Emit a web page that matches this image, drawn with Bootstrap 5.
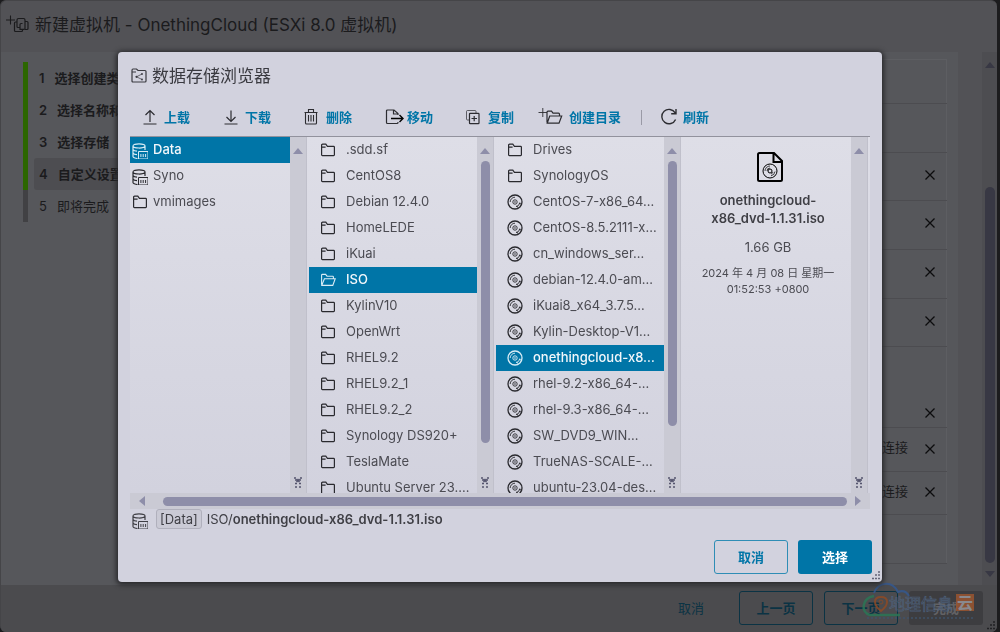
<!DOCTYPE html>
<html lang="zh-CN">
<head>
<meta charset="utf-8">
<meta name="viewport" content="width=device-width, initial-scale=1">
<title>数据存储浏览器</title>
<link href="https://cdn.jsdelivr.net/npm/bootstrap@5.3.0/dist/css/bootstrap.min.css" rel="stylesheet">
<style>
  :root { --ink:#3f3f45; --blue:#0075a7; --thumb:#8e8ea9; --track:#cacad4; }
  body { font-family:Inter,"Noto Sans CJK SC",sans-serif; font-size:13px; line-height:18px; color:var(--ink); background:#1c1c1e; }
  svg { flex:none; fill:none; stroke:currentColor; overflow:visible; }
  .i16 { width:16px; height:16px; }
  .i18 { width:18px; height:18px; }
  .defs { width:0; height:0; }

  /* wizard behind the dialog */
  .wizard { height:100vh; background:#525256; color:#1b1b1d; border-radius:6px; margin-right:3px; border:1px solid #454548; border-width:1px 0 0 1px; }
  .wizard-title { height:51px; padding:0 0 4px 5px; font-size:17px; line-height:24px; gap:6px; }
  .wizard-main { background:#56575b; min-height:0; }
  .steps { width:230px; padding:10px 0 0 22px; }
  .steps li { height:32px; border-left:5px solid #2c6600; padding-left:6px; }
  .steps li:last-child { border-color:#414144; }
  .steps a { height:32px; padding-left:5px; padding-bottom:1px; gap:10px; color:#1b1b1d; text-decoration:none; border-radius:3px; }
  .steps .done { font-weight:600; }
  .steps .now { background:#4d4d51; }
  .hw { padding:7px 11px 0 0; }
  .hw table { border:1px solid #5d5e62; border-left:0; width:100%; }
  .hw tr { border-bottom:1px solid #4c4c50; }
  .hw td { height:49px; padding:0 8px 6px 0; text-align:right; }
  .hw .short td { height:44px; padding-bottom:4px; }
  .hw tr:nth-child(3n) td { height:48px; }
  .hw .short:nth-child(3n) td { height:43px; }
  .hw .tall td { height:81px; vertical-align:bottom; padding-bottom:6px; }
  .x-btn { border:0; background:none; padding:0; width:16px; height:16px; margin-left:14px; color:#0c0c0e; line-height:0; }
  .gutter { width:24px; background:#525256; }
  .main-sb { width:15px; background:#4d4d51; padding:10px 3px 8px 3px; }
  .main-sb .thumb { background:#383844; width:10px; }
  .main-sb svg { color:#383844; }
  .wizard-foot { height:47px; padding:0 14px 1px 0; gap:11px; background:#4b4b4e; }
  .ui-btn { width:74px; height:34px; border-radius:3px; font-size:13px; line-height:18px; font-weight:600; padding:0 0 1px; border:1px solid transparent; background:none; }
  .ui-btn.dark { color:#0b3344; border-color:#0b3344; }
  .ui-btn.off { background:#3d3d40; color:#626265; }
  .grip { position:absolute; right:2px; bottom:2px; width:9px; height:9px; color:#66667a; }
  .wizard .grip { color:#222225; }
  .brand { position:absolute; right:17px; bottom:8px; width:120px; height:42px; opacity:.85; }
  .brand text { stroke:none; }

  /* dialog */
  .browser-modal { --bs-modal-width:764px; }
  .browser-modal .modal-dialog { margin-top:52px; margin-bottom:0; }
  .browser-modal .modal-content { background:#d2d2de; color:var(--ink); border:0; border-radius:4px; box-shadow:0 1px 5px 2px #29292c; padding:12px 10px 8px 12px; font-weight:400; }
  .dlg-title { font-size:17px; line-height:24px; font-weight:400; gap:4px; color:#3a3a40; }
  .tools { height:36px; padding-left:11px; margin:11px 0 1px; gap:32px; }
  .tools button { border:0; background:none; padding:0; gap:5px; color:var(--blue); font-weight:700; white-space:nowrap; }
  .tools svg { color:#2c2c31; }
  .tools .rule { width:1px; height:15px; background:#9a9aa6; margin:0 -14px 0 -12px; }
  .panes { height:357px; display:grid; grid-template-columns:177px 1fr 1fr 1fr; border-top:1px solid #92929d; padding-right:2px; margin-right:2px; background:linear-gradient(#dedee7,#d2d2de); }
  .pane { min-width:0; min-height:0; display:flex; border-right:1px solid #c0c0cb; overflow:hidden; }
  .pane + .pane { padding-left:2px; }
  .files { flex:1; min-width:0; overflow:hidden; border-radius:0; }
  .files .list-group-item { flex:none; display:flex; align-items:center; height:26px; padding:0 0 2px 11px; gap:10px; border:0; background:none; color:#4b4b52; white-space:nowrap; overflow:hidden; line-height:18px; }
  .files svg { color:#29292e; margin-top:1px; }
  .files .list-group-item.active { background:var(--blue); color:#f2f7fb; margin:0; font-weight:500; }
  .files .active svg { color:#d9ecf5; }
  .roots .list-group-item { padding-left:2px; gap:5px; }
  .vbar { width:16px; background:var(--track); padding:11px 0 4px; color:var(--thumb); }
  .thumb { width:9px; border-radius:5px; background:var(--thumb); }
  .vbar .thumb { margin-top:7px; }
  .thumb.long { height:282px; }
  .thumb.mid { height:265px; }
  .tri { width:10px; height:6px; fill:currentColor; stroke:none; }
  .knob { width:8px; height:12px; color:#55556e; }
  .hbar { height:16px; background:var(--track); color:var(--thumb); padding:0 9px; gap:8px; margin-right:2px; }
  .hbar .thumb { flex:1; height:9px; margin-left:10px; }
  .hbar .tri { width:6px; height:10px; }
  .info { flex:1; padding:15px 8px 0 10px; color:#4b4b52; }
  .info .doc { width:26px; height:30px; color:#000; margin-left:3px; }
  .info .name { font-weight:600; color:var(--ink); margin:9px 0 11px; }
  .info .date { font-size:11px; line-height:16px; margin-top:9px; }
  .crumb { height:20px; gap:5px; padding-left:2px; }
  .crumb .root { border:1px solid #b0b0bc; background:#cacad5; border-radius:3px; padding:0 3px; margin-left:3px; }
  .crumb b { font-weight:600; }
  .acts { gap:10px; margin-top:11px; }
  .acts .line { color:var(--blue); border-color:#2e8db5; }
  .acts .fill { background:var(--blue); color:#fff; }
</style>
</head>
<body>

<svg class="defs position-absolute" aria-hidden="true">
  <symbol id="folder" viewBox="0 0 16 16"><path d="M1.6 3.2q0-1 1-1h3.2l1.6 2.200h6.200q.8 0 .8.8v7.600q0 .8-.8.8H2.400q-.8 0-.8-.8zM1.600 5.200h4" stroke-width="1.2"/></symbol>
  <symbol id="folder-open" viewBox="0 0 16 16"><path d="M1.600 12.800V3.200q0-.8.8-.8h3.200l1.400 1.800h5.600q.8 0 .8.8v1.600M1.800 13.400 4.400 6.800h10.800l-2.400 6.600z" stroke-width="1.1"/></symbol>
  <symbol id="store" viewBox="0 0 16 16"><path d="M5.500 15.500Q1 15 1 13.500V3M1 3C1 .2 13 .2 13 3S1 5.600 1 3M13 3v4M1 6.500q1 1.600 4 1.700M1 10q1 1.600 4 1.700" stroke-width="1.200"/><path d="M6.500 8.500h9.500v7.500H6.500zM8.900 11v3M11.200 11v3M13.600 11v3" stroke-width="1"/></symbol>
  <symbol id="disc" viewBox="0 0 16 16"><circle cx="8" cy="8" r="7" stroke-width="1.3"/><circle cx="8" cy="8" r="2.200" stroke-width=".9"/><circle cx="8" cy="8" r=".4" stroke-width=".8"/><path d="M3.200 8A4.800 4.800 0 0 1 8 3.200M12.800 8.600A4.800 4.800 0 0 1 9 12.700M14.200 10 12 9.200M11 13.800l-1.200-2" stroke-width=".9"/></symbol>
  <symbol id="close" viewBox="0 0 16 16"><path d="m3.500 3.500 9 9m0-9-9 9" stroke-width="1.300"/></symbol>
  <symbol id="up" viewBox="0 0 10 6"><path d="M0 6 5 0l5 6z"/></symbol>
  <symbol id="knob" viewBox="0 0 8 12"><path d="M0 1h2M6 1h2M1 3h6M2.500 2l3 3M5.500 2l-3 3M1 6.500h2M5 6.500h2M1 10h2M5 10h2" stroke-width="1.500"/></symbol>
  <symbol id="grip" viewBox="0 0 9 9"><path d="M7 1h2M4 4h2M7 4h2M1 7.500h2M4 7.500h2M7 7.500h2" stroke-width="1.600"/></symbol>
</svg>

<main class="wizard d-flex flex-column position-relative overflow-hidden">
  <header class="wizard-title d-flex align-items-center">
    <svg width="23" height="18" viewBox="0 0 23 18"><path d="M0 4h9M4.500-.5v9" stroke-width="1.100"/><path d="M11 6V4q0-1.500 1.500-1.500h5q1.500 0 1.500 1.500v8.500q0 .8-1 .8H14V8.500q0-1 1-1h1.500M11 6H9.500Q8.500 6 8.500 7v7.500q0 1 1 1h6q1 0 1-1v-1M19 5.500h2q1 0 1 1v6q0 1-1 1h-2M11 6v4.500q0 1 1 1h2" stroke-width="1.200"/></svg>
    <span>新建虚拟机 - OnethingCloud (ESXi 8.0 虚拟机)</span>
  </header>
  <div class="wizard-main d-flex flex-fill overflow-hidden">
    <ol class="steps list-unstyled mb-0">
      <li><a href="#" class="done d-flex align-items-center"><span>1</span>选择创建类型</a></li>
      <li><a href="#" class="done d-flex align-items-center"><span>2</span>选择名称和客户机操作系统</a></li>
      <li><a href="#" class="done d-flex align-items-center"><span>3</span>选择存储</a></li>
      <li><a href="#" class="done now d-flex align-items-center"><span>4</span>自定义设置</a></li>
      <li><a href="#" class="d-flex align-items-center"><span>5</span>即将完成</a></li>
    </ol>
    <div class="hw flex-fill">
      <table>
        <tbody>
          <tr class="short"><td></td></tr>
          <tr><td></td></tr>
          <tr><td><button class="x-btn" aria-label="移除"><svg class="i16"><use href="#close"/></svg></button></td></tr>
          <tr><td><button class="x-btn" aria-label="移除"><svg class="i16"><use href="#close"/></svg></button></td></tr>
          <tr><td><button class="x-btn" aria-label="移除"><svg class="i16"><use href="#close"/></svg></button></td></tr>
          <tr><td><button class="x-btn" aria-label="移除"><svg class="i16"><use href="#close"/></svg></button></td></tr>
          <tr class="tall"><td><button class="x-btn" aria-label="移除"><svg class="i16"><use href="#close"/></svg></button></td></tr>
          <tr class="short"><td>连接<button class="x-btn" aria-label="移除"><svg class="i16"><use href="#close"/></svg></button></td></tr>
          <tr class="short"><td>连接<button class="x-btn" aria-label="移除"><svg class="i16"><use href="#close"/></svg></button></td></tr>
          <tr><td></td></tr>
        </tbody>
      </table>
    </div>
    <div class="gutter"></div>
    <div class="main-sb d-flex flex-column align-items-center">
      <svg class="tri"><use href="#up"/></svg>
      <div style="height:119px"></div>
      <div class="thumb flex-fill"></div>
      <svg class="tri mt-2" viewBox="0 0 10 6"><path d="M0 0h10L5 6z"/></svg>
    </div>
  </div>
  <footer class="wizard-foot d-flex align-items-center justify-content-end">
    <button class="ui-btn dark border-0 fw-normal">取消</button>
    <button class="ui-btn dark">上一页</button>
    <button class="ui-btn dark">下一页</button>
    <button class="ui-btn off">完成</button>
  </footer>
  <svg class="brand" viewBox="0 0 120 42" aria-hidden="true">
    <path d="M14 11C18 0 32-2 38 10q7-3 11 4" stroke="#34588f" stroke-width="2"/>
    <path d="M14 14C2 16 0 30 10 33h30" stroke="#2b7656" stroke-width="2.500"/>
    <path d="M21 29c-8-6-8-14 0-14s8 8 0 14z" stroke="#8d4a26" stroke-width="2"/><circle cx="21" cy="20" r="2" stroke="#8d4a26"/>
    <text x="29" y="28" font-size="16" style="stroke:#4f6480;stroke-width:.7">地理信息</text>
    <rect x="96" y="12" width="18" height="17" fill="#9a5530" stroke="none"/><text x="97" y="27" font-size="16" font-weight="700" fill="#97979c">云</text>
    <path d="M7 36h106" stroke="#40566f" stroke-width="1.500" stroke-dasharray="2 2"/>
  </svg>
  <svg class="grip"><use href="#grip"/></svg>
</main>

<div class="browser-modal modal d-block" role="dialog" aria-labelledby="dlgTitle">
  <div class="modal-dialog">
    <div class="modal-content">
      <h1 id="dlgTitle" class="dlg-title d-flex align-items-center mb-0">
        <svg class="i18" viewBox="0 0 18 18"><path d="M2 3.500Q2 2 3 2h3.500L8 3.500h7q1 0 1 1v9.500q0 1-1 1H3q-1 0-1-1zM2 5h4" stroke-width="1.200"/><path d="m12 7-5.500 2.800 5.500 2.700" stroke-width=".7"/><g fill="currentColor" stroke="none"><circle cx="12" cy="7" r=".9"/><circle cx="6.500" cy="9.800" r="1.100"/><circle cx="12" cy="12.500" r=".9"/></g></svg>
        数据存储浏览器
      </h1>
      <div class="tools d-flex align-items-center" role="toolbar">
        <button class="d-flex align-items-center"><svg class="i18" viewBox="0 0 18 18"><path d="M9 14V2.500M4.500 7 9 2.500 13.500 7M2.500 16h13" stroke-width="1.200"/></svg>上载</button>
        <button class="d-flex align-items-center"><svg class="i18" viewBox="0 0 18 18"><path d="M9 2.500v11M4.500 9 9 13.500 13.500 9M2.500 16h13" stroke-width="1.200"/></svg>下载</button>
        <button class="d-flex align-items-center"><svg class="i18" viewBox="0 0 18 18"><path d="M1.500 4.500h13M5.500 4.500v-3h5v3M2.500 4.500V15q0 1 1 1h9q1 0 1-1V4.500M5.500 7v6.500M8 7v6.500M10.500 7v6.500" stroke-width="1.100"/></svg>删除</button>
        <button class="d-flex align-items-center"><svg class="i18" viewBox="0 0 18 18"><path d="M14 7V5.500L10 2H3.500q-1 0-1 1v11.500q0 1 1 1h9.500q1 0 1-1V14M9.500 2v4h4.500" stroke-width="1.200"/><path d="M7 10.500h12M15.500 7l3.500 3.500-3.500 3.500" stroke="#000" stroke-width="1.400"/></svg>移动</button>
        <button class="d-flex align-items-center"><svg class="i18" viewBox="0 0 18 18"><path d="M4.500 12H2.500q-1 0-1-1V3.500q0-1 1-1h7.500q1 0 1 1V5" stroke-width=".7"/><path d="M4.500 6q0-.7.700-.7h8.100q.7 0 .7.700v9q0 .7-.7.700H5.200q-.7 0-.7-.7zM6.500 10.500h5.500M9.200 8v5.200" stroke-width="1.200"/></svg>复制</button>
        <button class="d-flex align-items-center"><svg class="i18" viewBox="0 0 18 18"><path d="M-7.500 4.500h8.500M-3.200 0v9" stroke-width=".9"/><path d="M1 14.500V4.200q0-1 1-1h3.500l1.500 2h5.500q1 0 1 1v1.600M1.200 15.200 3.700 8h12L13 15.200z" stroke-width="1.200"/></svg>创建目录</button>
        <span class="rule"></span>
        <button class="d-flex align-items-center"><svg class="i18" viewBox="0 0 18 18"><path d="M15.600 11.500A7.200 7.200 0 1 1 15.200 4.900M16 1v4.800h-4.800" stroke-width="1.400"/></svg>刷新</button>
      </div>

      <div class="panes">
        <section class="pane">
          <div class="files roots list-group">
            <button class="list-group-item active"><svg class="i16 mt-1"><use href="#store"/></svg>Data</button>
            <button class="list-group-item"><svg class="i16 mt-1"><use href="#store"/></svg>Syno</button>
            <button class="list-group-item"><svg class="i16"><use href="#folder"/></svg>vmimages</button>
          </div>
          <div class="vbar d-flex flex-column align-items-center"><svg class="tri"><use href="#up"/></svg><svg class="knob mt-auto"><use href="#knob"/></svg></div>
        </section>
        <section class="pane">
          <div class="files list-group">
            <button class="list-group-item"><svg class="i16"><use href="#folder"/></svg>.sdd.sf</button>
            <button class="list-group-item"><svg class="i16"><use href="#folder"/></svg>CentOS8</button>
            <button class="list-group-item"><svg class="i16"><use href="#folder"/></svg>Debian 12.4.0</button>
            <button class="list-group-item"><svg class="i16"><use href="#folder"/></svg>HomeLEDE</button>
            <button class="list-group-item"><svg class="i16"><use href="#folder"/></svg>iKuai</button>
            <button class="list-group-item active"><svg class="i16"><use href="#folder-open"/></svg>ISO</button>
            <button class="list-group-item"><svg class="i16"><use href="#folder"/></svg>KylinV10</button>
            <button class="list-group-item"><svg class="i16"><use href="#folder"/></svg>OpenWrt</button>
            <button class="list-group-item"><svg class="i16"><use href="#folder"/></svg>RHEL9.2</button>
            <button class="list-group-item"><svg class="i16"><use href="#folder"/></svg>RHEL9.2_1</button>
            <button class="list-group-item"><svg class="i16"><use href="#folder"/></svg>RHEL9.2_2</button>
            <button class="list-group-item"><svg class="i16"><use href="#folder"/></svg>Synology DS920+</button>
            <button class="list-group-item"><svg class="i16"><use href="#folder"/></svg>TeslaMate</button>
            <button class="list-group-item"><svg class="i16"><use href="#folder"/></svg>Ubuntu Server 23.…</button>
          </div>
          <div class="vbar d-flex flex-column align-items-center"><svg class="tri"><use href="#up"/></svg><div class="thumb long"></div><svg class="knob mt-auto"><use href="#knob"/></svg></div>
        </section>
        <section class="pane">
          <div class="files list-group">
            <button class="list-group-item"><svg class="i16"><use href="#folder"/></svg>Drives</button>
            <button class="list-group-item"><svg class="i16"><use href="#folder"/></svg>SynologyOS</button>
            <button class="list-group-item"><svg class="i16"><use href="#disc"/></svg>CentOS-7-x86_64…</button>
            <button class="list-group-item"><svg class="i16"><use href="#disc"/></svg>CentOS-8.5.2111-x…</button>
            <button class="list-group-item"><svg class="i16"><use href="#disc"/></svg>cn_windows_ser…</button>
            <button class="list-group-item"><svg class="i16"><use href="#disc"/></svg>debian-12.4.0-am…</button>
            <button class="list-group-item"><svg class="i16"><use href="#disc"/></svg>iKuai8_x64_3.7.5…</button>
            <button class="list-group-item"><svg class="i16"><use href="#disc"/></svg>Kylin-Desktop-V1…</button>
            <button class="list-group-item active"><svg class="i16"><use href="#disc"/></svg>onethingcloud-x8…</button>
            <button class="list-group-item"><svg class="i16"><use href="#disc"/></svg>rhel-9.2-x86_64-…</button>
            <button class="list-group-item"><svg class="i16"><use href="#disc"/></svg>rhel-9.3-x86_64-…</button>
            <button class="list-group-item"><svg class="i16"><use href="#disc"/></svg>SW_DVD9_WIN…</button>
            <button class="list-group-item"><svg class="i16"><use href="#disc"/></svg>TrueNAS-SCALE-…</button>
            <button class="list-group-item"><svg class="i16"><use href="#disc"/></svg>ubuntu-23.04-des…</button>
          </div>
          <div class="vbar d-flex flex-column align-items-center"><svg class="tri"><use href="#up"/></svg><div class="thumb mid"></div><svg class="knob mt-auto"><use href="#knob"/></svg></div>
        </section>
        <section class="pane">
          <div class="info text-center">
            <svg class="doc" viewBox="0 0 26 30"><path d="M17 1H2.500Q1 1 1 2.500v25Q1 29 2.500 29h21q1.500 0 1.500-1.500V9zM16.500 1v9H25" stroke-width="2"/><g stroke-width="1"><circle cx="13" cy="19" r="7"/><circle cx="13" cy="19" r="2"/><path d="M8 19a5 5 0 0 1 5-5M10 19a3 3 0 0 1 3-3M18 19.500a5 5 0 0 1-4 4.300M16 20a3 3 0 0 1-2 2" stroke-width=".7"/></g></svg>
            <div class="name">onethingcloud-<br>x86_dvd-1.1.31.iso</div>
            <div>1.66 GB</div>
            <div class="date">2024 年 4 月 08 日 星期一<br>01:52:53 +0800</div>
          </div>
          <div class="vbar d-flex flex-column align-items-center"><svg class="tri"><use href="#up"/></svg><svg class="knob mt-auto"><use href="#knob"/></svg></div>
        </section>
      </div>
      <div class="hbar d-flex align-items-center">
        <svg class="tri" viewBox="0 0 6 10"><path d="M6 0v10L0 5z"/></svg>
        <div class="thumb"></div>
        <svg class="tri" viewBox="0 0 6 10"><path d="M0 0v10l6-5z"/></svg>
      </div>
      <div class="crumb d-flex align-items-center">
        <svg class="i16 mt-1"><use href="#store"/></svg>
        <span class="root">[Data]</span>
        <span>ISO/<b>onethingcloud-x86_dvd-1.1.31.iso</b></span>
      </div>
      <div class="acts d-flex justify-content-end">
        <button class="ui-btn line">取消</button>
        <button class="ui-btn fill">选择</button>
      </div>
      <svg class="grip"><use href="#grip"/></svg>
    </div>
  </div>
</div>

<script src="https://cdn.jsdelivr.net/npm/bootstrap@5.3.0/dist/js/bootstrap.bundle.min.js"></script>
</body>
</html>
